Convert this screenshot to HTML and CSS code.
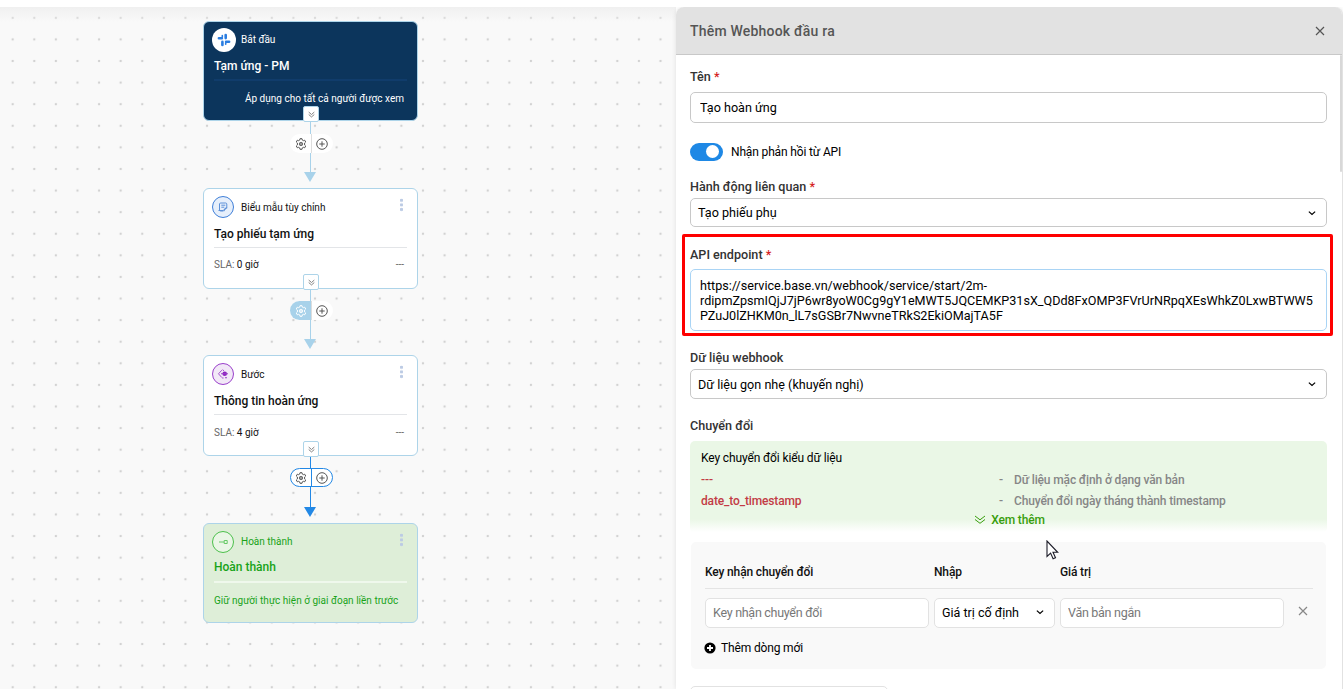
FILE: index.html
```html
<!DOCTYPE html>
<html lang="vi">
<head>
    <meta charset="UTF-8">
    <title>Thêm Webhook đầu ra</title>
    <link rel="stylesheet" href="styles.css">
</head>
<body>

<!-- shared icons -->
<svg class="defs" width="0" height="0">
    <symbol id="gear" viewBox="0 0 12 12">
        <path d="M4.7 2.1 5 .7h2l.3 1.400 1 .6 1.400-.5 1 1.800L9.600 5v2l1.100 1-1 1.800-1.400-.5-1 .6L7 11.300H5l-.3-1.400-1-.6-1.400.5-1-1.800L2.400 7V5L1.300 4l1-1.800 1.400.5z" fill="none" stroke="currentColor" stroke-linejoin="round"/>
        <circle cx="6" cy="6" r="1.700" fill="currentColor" fill-opacity=".6" stroke="currentColor" stroke-width=".8"/>
    </symbol>
    <symbol id="plus" viewBox="0 0 12 12">
        <circle cx="6" cy="6" r="5.300" fill="none" stroke="currentColor"/>
        <path d="M6 3.300v5.400M3.300 6h5.400" stroke="currentColor"/>
    </symbol>
    <symbol id="double-down" viewBox="0 0 10 10">
        <path d="M1 1.500 5 5l4-3.500M1 5l4 3.500L9 5" fill="none" stroke="currentColor" stroke-width="1.300"/>
    </symbol>
    <symbol id="chevron" viewBox="0 0 8 8">
        <path d="M1.500 2.900 4 5.200l2.500-2.300" fill="none" stroke="currentColor" stroke-width="1"/>
    </symbol>
    <symbol id="close" viewBox="0 0 10 10">
        <path d="m1 1 8 8M9 1 1 9" fill="none" stroke="currentColor" stroke-width="1.200"/>
    </symbol>
</svg>

<div class="canvas">
    <div class="node node-start">
        <div class="node-head">
            <span class="node-icon">
                <svg width="14" height="14" viewBox="0 0 14 14">
                    <path d="M1.900 5.300h3M5.400 8.900v3M8.700 2.100v3M9.100 8.700h3" fill="none" stroke="#2a7de1" stroke-width="2.600" stroke-linecap="round"/>
                    <path d="M5.300 2.500v1.800M8.700 9.700v1.600" fill="none" stroke="#2a7de1" stroke-width="1.600" stroke-linecap="round"/>
                </svg>
            </span>
            <span class="node-type">Bắt đầu</span>
        </div>
        <div class="node-title">Tạm ứng - PM</div>
        <div class="node-foot">Áp dụng cho tất cả người được xem</div>
        <span class="node-toggle"><svg width="7" height="7"><use href="#double-down"/></svg></span>
    </div>

    <div class="link link-1">
        <div class="link-tools">
            <span><svg width="12" height="12"><use href="#gear"/></svg></span>
            <span><svg width="12" height="12"><use href="#plus"/></svg></span>
        </div>
    </div>

    <div class="node node-form">
        <div class="node-head">
            <span class="node-icon">
                <svg width="10" height="10" viewBox="0 0 10 10" fill="none" stroke="#5c90d8">
                    <path d="M5.500 9H2.700C2 9 1.500 8.600 1.500 8V2c0-.6.5-1 1.200-1h5c.6 0 1.100.4 1.100 1v4.300M.5 8.500h5M3.300 3.200h4M3.300 5.200h3"/>
                    <path d="m6 9 .3-1.300L8.700 5.500" stroke-width="1.300"/>
                </svg>
            </span>
            <span class="node-type">Biểu mẫu tùy chỉnh</span>
            <span class="dots"></span>
        </div>
        <div class="node-title">Tạo phiếu tạm ứng</div>
        <div class="node-foot"><span><span class="muted">SLA:</span> 0 giờ</span><span class="muted">---</span></div>
        <span class="node-toggle"><svg width="7" height="7"><use href="#double-down"/></svg></span>
    </div>

    <div class="link link-2">
        <div class="link-tools">
            <span class="filled"><svg width="12" height="12"><use href="#gear"/></svg></span>
            <span><svg width="12" height="12"><use href="#plus"/></svg></span>
        </div>
    </div>

    <div class="node node-step">
        <div class="node-head">
            <span class="node-icon">
                <svg width="12" height="12" viewBox="0 0 12 12" fill="none" stroke="#9b3fc9">
                    <path d="M4.800 2.200 1.500 5.800 4.800 9.500M5.500 1.700 7 2.800" stroke-width=".9"/>
                    <circle cx="7.700" cy="5.800" r="2.300" fill="#8c22c0" stroke="none"/>
                    <path d="M4 5.800h7M5.200 10h1.300M8 9.700h2" stroke-width="1.100"/>
                </svg>
            </span>
            <span class="node-type">Bước</span>
            <span class="dots"></span>
        </div>
        <div class="node-title">Thông tin hoàn ứng</div>
        <div class="node-foot"><span><span class="muted">SLA:</span> 4 giờ</span><span class="muted">---</span></div>
        <span class="node-toggle"><svg width="7" height="7"><use href="#double-down"/></svg></span>
    </div>

    <div class="link link-3">
        <div class="link-tools">
            <span><svg width="12" height="12"><use href="#gear"/></svg></span>
            <span><svg width="12" height="12"><use href="#plus"/></svg></span>
        </div>
    </div>

    <div class="node node-done">
        <div class="node-head">
            <span class="node-icon">
                <svg width="10" height="6" viewBox="0 0 10 6" fill="none" stroke="#65c965">
                    <path d="M1 3h5M6.200 1.500h3v3h-3z"/>
                </svg>
            </span>
            <span class="node-type">Hoàn thành</span>
            <span class="dots"></span>
        </div>
        <div class="node-title">Hoàn thành</div>
        <div class="node-foot">Giữ người thực hiện ở giai đoạn liền trước</div>
    </div>
</div>

<div class="panel">
    <div class="panel-header">
        <span class="panel-title">Thêm Webhook đầu ra</span>
        <svg width="10" height="10"><use href="#close"/></svg>
    </div>

    <form class="panel-body">
        <label>Tên <b>*</b></label>
        <input class="field name" type="text" value="Tạo hoàn ứng">

        <div class="switch-row">
            <span class="switch"></span>
            <span class="switch-text">Nhận phản hồi từ API</span>
        </div>

        <label class="tight">Hành động liên quan <b>*</b></label>
        <div class="field select">
            <span>Tạo phiếu phụ</span>
            <svg width="10" height="10"><use href="#chevron"/></svg>
        </div>

        <div class="endpoint">
            <label>API endpoint <b>*</b></label>
            <div class="field url">https://service.base.vn/webhook/service/start/2m-<br>rdipmZpsmIQjJ7jP6wr8yoW0Cg9gY1eMWT5JQCEMKP31sX_QDd8FxOMP3FVrUrNRpqXEsWhkZ0LxwBTWW5<br>PZuJ0lZHKM0n_lL7sGSBr7NwvneTRkS2EkiOMajTA5F</div>
        </div>

        <label class="tight">Dữ liệu webhook</label>
        <div class="field select data">
            <span>Dữ liệu gọn nhẹ (khuyến nghị)</span>
            <svg width="10" height="10"><use href="#chevron"/></svg>
        </div>

        <label>Chuyển đổi</label>
        <div class="hints">
            <div class="hints-title">Key chuyển đổi kiểu dữ liệu</div>
            <div class="hint"><span class="key">---</span><span>-</span><span>Dữ liệu mặc định ở dạng văn bản</span></div>
            <div class="hint"><span class="key">date_to_timestamp</span><span>-</span><span>Chuyển đổi ngày tháng thành timestamp</span></div>
            <div class="more"><svg width="12" height="10" viewBox="0 0 12 10"><path d="m1 1 5 3.800L11 1M1 4.500l5 3.800 5-3.800" fill="none" stroke="currentColor"/></svg><span>Xem thêm</span></div>
        </div>

        <div class="mapping">
            <div class="map-row map-head">
                <span>Key nhận chuyển đổi</span>
                <span>Nhập</span>
                <span>Giá trị</span>
            </div>
            <div class="map-row">
                <input type="text" placeholder="Key nhận chuyển đổi">
                <div class="map-select">
                    <span>Giá trị cố định</span>
                    <svg width="10" height="10"><use href="#chevron"/></svg>
                </div>
                <input type="text" placeholder="Văn bản ngắn">
                <svg class="remove" width="10" height="10"><use href="#close"/></svg>
            </div>
            <div class="add-row">
                <svg width="12" height="12" viewBox="0 0 12 12">
                    <circle cx="6" cy="6" r="5.600"/>
                    <path d="M6 3v6M3 6h6" stroke="#fff" stroke-width="1.800"/>
                </svg>
                <span>Thêm dòng mới</span>
            </div>
        </div>

        <div class="next-box"></div>
    </form>
    <span class="scrollbar"></span>
</div>

<svg class="cursor" width="13" height="20" viewBox="0 0 13 20">
    <path d="M1 1v15.500l3.600-3.400 2.500 5.600 2.400-1-2.500-5.400h4.700z" fill="#fff" stroke="#1c1c28" stroke-width="1.100"/>
</svg>

</body>
</html>
```
FILE: styles.css
```css
* {
    box-sizing: border-box;
}
body {
    margin: 0;
    padding-top: 7px;
    height: 689px;
    display: flex;
    overflow: hidden;
    background: #fff;
    font-family: Roboto, sans-serif;
    font-size: 12.500px;
    color: #111;
}
svg {
    display: block;
    flex: none;
}
.defs {
    position: absolute;
}

/* flow canvas */
.canvas {
    position: relative;
    width: 676px;
    height: 682px;
    background: linear-gradient(#f0f0f0, rgba(249,249,249,0) 15px) 0 0 / 100% 15px no-repeat,
        radial-gradient(circle, #d2d2d2 0.9px, rgba(210,210,210,0) 1.600px) 1.900px 0 / 21.600px 21.600px,
        #f9f9f9;
}
.node {
    position: absolute;
    left: 203px;
    width: 215px;
    height: 101px;
    padding: 7px 10px 0 9px;
    border: 1px solid #add4e9;
    border-radius: 6px;
    background: #fff;
}
.node-start {
    top: 14px;
    height: 100px;
    padding-top: 6px;
    background: #0c355c;
    color: #fff;
}
.node-form {
    top: 181px;
}
.node-step {
    top: 348px;
}
.node-done {
    top: 516px;
    height: 100px;
    background: #deeed8;
    color: #18a318;
}
.node-head {
    display: flex;
    align-items: center;
    height: 22px;
}
.node-icon {
    display: flex;
    align-items: center;
    justify-content: center;
    width: 22px;
    height: 22px;
    margin-left: -1px;
    margin-right: 7px;
    border: 1px solid #3f7fd8;
    border-radius: 50%;
    background: #e6effb;
}
.node-start .node-head {
    height: 24px;
}
.node-start .node-icon {
    width: 24px;
    height: 24px;
    margin-right: 5px;
    border: none;
    background: #fff;
}
.node-step .node-icon {
    border-color: #9a3fcb;
    background: #f2e8f7;
}
.node-done .node-icon {
    border-color: #4cc04c;
    background: #eaf6e6;
}
.node-type {
    font-size: 10px;
}
.node-start .node-type,
.node-done .node-type {
    margin-top: -1px;
}
.dots {
    width: 3px;
    height: 14px;
    margin: -4px 4px 0 auto;
    background: radial-gradient(circle, #bccbe4 1.300px, transparent 1.900px) 0 0 / 3px 4.600px;
}
.node-title {
    margin: 7px 0 0 1px;
    padding-top: 1px;
    height: 23px;
    border-bottom: 1px solid #e3e5e8;
    font-size: 12px;
    font-weight: 500;
    line-height: 16px;
}
.node-start .node-title {
    height: 24px;
    margin-top: 5px;
    border-bottom: 2px solid #103c6b;
}
.node-done .node-title {
    padding-top: 0;
    margin-top: 6px;
    height: 24px;
    border-bottom: 2px solid #eff8ec;
}
.node-foot {
    display: flex;
    justify-content: space-between;
    margin: 11px 3px 0 1px;
    font-size: 10px;
    line-height: 14px;
}
.node-form .node-foot {
    margin-top: 10px;
}
.node-done .node-foot {
    letter-spacing: 0.020px;
}
.node-start .node-foot {
    justify-content: flex-end;
    letter-spacing: 0.020px;
}
.muted {
    color: #666;
}
.node-toggle {
    position: absolute;
    left: 99px;
    bottom: -2px;
    display: flex;
    align-items: center;
    justify-content: center;
    width: 16px;
    height: 16px;
    border: 1px solid #add4e9;
    border-radius: 2px;
    background: #fff;
    color: #777;
}

/* connectors */
.link {
    position: absolute;
    left: 290px;
    width: 43px;
    height: 60px;
    padding-top: 12px;
    color: #a8d2ea;
    background: linear-gradient(currentColor, currentColor) 20px 0 / 1px 52px no-repeat;
}
.link::after {
    content: "";
    position: absolute;
    left: 14px;
    bottom: 0;
    border: 6.500px solid transparent;
    border-top: 10px solid currentColor;
    border-bottom: none;
}
.link-1 {
    top: 115px;
}
.link-2 {
    top: 282px;
}
.link-3 {
    top: 450px;
    height: 60px;
    padding-top: 11px;
    color: #2388e5;
}
.link-tools {
    display: flex;
    width: 43px;
    height: 19px;
    border-radius: 10px;
    background: #fff;
    overflow: hidden;
}
.link-tools span {
    display: flex;
    align-items: center;
    justify-content: center;
    width: 20px;
    color: #555;
}
.link-tools span:first-child {
    width: 22px;
    border-right: 1px solid #ddd;
}
.link-tools span.filled {
    background: #a8d2ea;
    color: #fff;
}
.link-3 .link-tools {
    border: 1px solid #2388e5;
}
.link-3 .link-tools span:first-child {
    border-color: #2388e5;
}

/* side panel */
.panel {
    position: relative;
    width: 667px;
    height: 682px;
    border-right: 1px solid #e2e2e2;
    border-radius: 8px 8px 0 0;
    background: #fff;
    box-shadow: 0 0 5px rgba(0,0,0,0.1);
    overflow: hidden;
    clip-path: inset(0 0 0 -6px);
}
.panel-header {
    display: flex;
    align-items: center;
    justify-content: space-between;
    height: 48px;
    padding: 0 17px 0 14px;
    border-bottom: 1px solid #c8c8c8;
    background: #e2e2e2;
    color: #555;
}
.panel-title {
    font-size: 14px;
    font-weight: 500;
    letter-spacing: 0.200px;
}
.panel-body {
    display: flex;
    flex-direction: column;
    padding: 14px 15px 0 14px;
}
label {
    height: 16px;
    margin-bottom: 7px;
    color: #333;
    font-size: 12.600px;
    font-weight: 500;
    line-height: 16px;
}
label b {
    color: #d51f1f;
    font-weight: 500;
}
label.tight {
    margin-bottom: 3px;
}
.field {
    height: 31px;
    padding: 0 9px;
    border: 1px solid #c8c8c8;
    border-radius: 5px;
    background: #fff;
    color: #000;
    font: 12.600px Roboto, sans-serif;
}
.select {
    display: flex;
    align-items: center;
    justify-content: space-between;
    height: 29px;
    padding: 0 9px 0 7px;
}
.switch-row {
    display: flex;
    align-items: center;
    gap: 8px;
    height: 18px;
    margin: 20px 0 18px;
    color: #000;
}
.switch {
    width: 33px;
    height: 18px;
    padding: 2px 4px 2px 16px;
    border-radius: 9px;
    background: #1e88e5;
}
.switch::before {
    content: "";
    display: block;
    width: 13px;
    height: 13px;
    border-radius: 50%;
    background: #fff;
}
.switch-text {
    font-size: 12px;
    letter-spacing: -0.150px;
}
.endpoint {
    position: relative;
    display: flex;
    flex-direction: column;
    margin: 20px 0 19px;
}
/* highlight frame around the endpoint field */
.endpoint::before {
    content: "";
    position: absolute;
    inset: -13px -6px -5px -8px;
    border: 3px solid #fe0000;
    border-radius: 2px;
}
.endpoint label {
    margin-bottom: 6px;
}
.url {
    height: 62px;
    padding-top: 8px;
    border-color: #a9d4f5;
    line-height: 15px;
    white-space: nowrap;
}
.data {
    height: 30px;
    margin-bottom: 19px;
}
.hints {
    height: 92px;
    padding: 8px 11px 0;
    border-radius: 5px;
    background: linear-gradient(#eaf7e6 78px, #fff 91px);
}
.hints-title {
    height: 21px;
    line-height: 19px;
    font-size: 12px;
    letter-spacing: -0.120px;
    color: #000;
}
.hint {
    display: grid;
    grid-template-columns: 298px 15px 1fr;
    height: 21px;
    line-height: 21px;
    font-size: 12px;
    font-weight: 500;
    letter-spacing: -0.140px;
    color: #868686;
}
.key {
    color: #c23c45;
}
.more {
    display: flex;
    align-items: center;
    justify-content: center;
    gap: 5px;
    height: 16px;
    margin-left: 2px;
    color: #389e0d;
    font-size: 12px;
    font-weight: 500;
    letter-spacing: -0.150px;
}
.mapping {
    height: 127px;
    margin: 9px 1px 17px;
    padding: 14px 13px 0 14px;
    border-radius: 5px;
    background: #f9f9f9;
}
.map-row {
    display: grid;
    grid-template-columns: 224px 121px 224px 10px;
    column-gap: 5px;
    align-items: center;
    margin-top: 9px;
}
.map-head {
    height: 33px;
    margin-top: 0;
    border-bottom: 1px solid #e4e4e4;
    color: #111;
    font-size: 12px;
    font-weight: 500;
    letter-spacing: -0.140px;
}
.map-row input,
.map-select {
    width: 100%;
    height: 30px;
    padding: 0 7px 2px;
    border: 1px solid #e2e2e2;
    border-radius: 5px;
    background: #fff;
    color: #000;
    font: 12.500px Roboto, sans-serif;
    letter-spacing: -0.280px;
}
.map-select {
    display: flex;
    align-items: center;
    justify-content: space-between;
    padding-right: 9px;
    letter-spacing: 0;
}
.map-row input::placeholder {
    color: #777;
}
.remove {
    margin: -4px 0 0 9px;
    color: #888;
}
.add-row {
    display: flex;
    align-items: center;
    gap: 5px;
    margin: 13px 0 0 -1px;
    color: #000;
    font-size: 12px;
    letter-spacing: -0.150px;
}
.next-box {
    width: 198px;
    height: 30px;
    border: 1px solid #e2e2e2;
    border-radius: 5px;
}
.scrollbar {
    position: absolute;
    top: 48px;
    right: 0;
    width: 2px;
    height: 117px;
    border-radius: 2px;
    background: #d8d8d8;
}
.cursor {
    position: absolute;
    left: 1046px;
    top: 540px;
}
```
